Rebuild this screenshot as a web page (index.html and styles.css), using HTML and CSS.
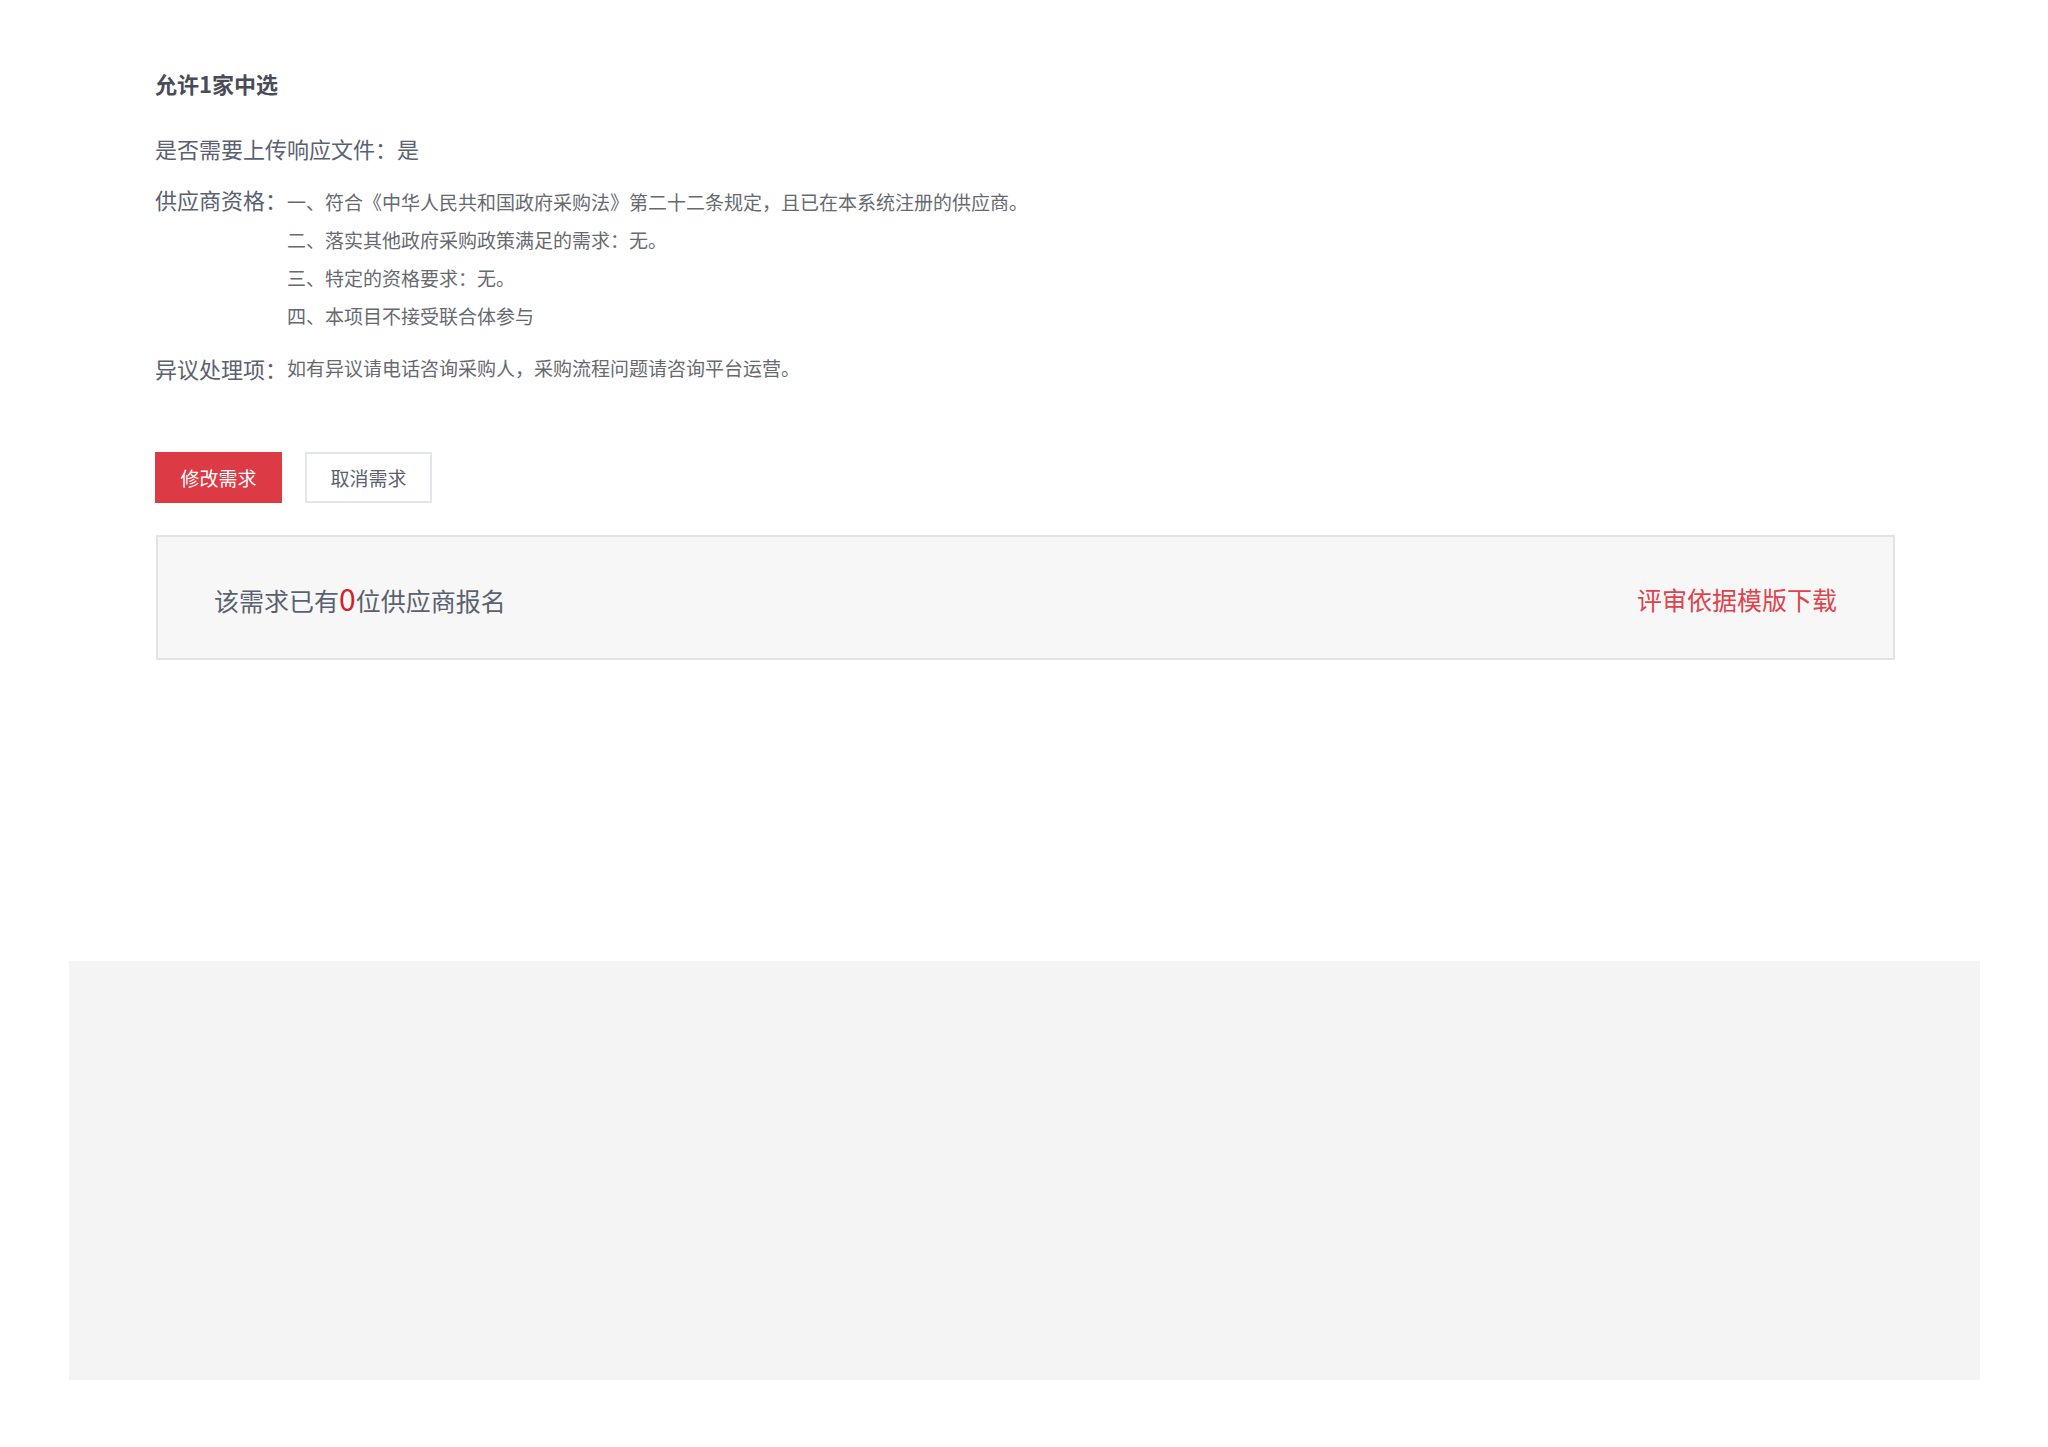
FILE: index.html
```html
<!DOCTYPE html>
<html lang="zh-CN">
<head>
<meta charset="utf-8">
<title>需求详情</title>
<link rel="stylesheet" href="styles.css">
</head>
<body>
<main class="content">
  <h2 class="title">允许1家中选</h2>
  <div class="row row-upload">是否需要上传响应文件：是</div>
  <div class="row row-qual">
    <span class="label">供应商资格：</span>
    <ul class="qual-list">
      <li>一、符合《中华人民共和国政府采购法》第二十二条规定，且已在本系统注册的供应商。</li>
      <li>二、落实其他政府采购政策满足的需求：无。</li>
      <li>三、特定的资格要求：无。</li>
      <li>四、本项目不接受联合体参与</li>
    </ul>
  </div>
  <div class="row row-objection">
    <span class="label">异议处理项：</span>
    <span class="value">如有异议请电话咨询采购人，采购流程问题请咨询平台运营。</span>
  </div>
  <div class="actions">
    <button class="btn btn-primary">修改需求</button>
    <button class="btn btn-default">取消需求</button>
  </div>
  <div class="signup-box">
    <div class="signup-text">该需求已有<span class="count">0</span>位供应商报名</div>
    <a class="download" href="#">评审依据模版下载</a>
  </div>
</main>
<footer class="footer-block"></footer>
</body>
</html>
```

FILE: styles.css
```css
html, body {
  margin: 0;
  padding: 0;
  background: #ffffff;
}

body {
  font-family: "Noto Sans CJK SC", "Noto Sans", sans-serif;
  color: #5a6170;
}

.content {
  margin-left: 155px;
  width: 1739px;
  padding-top: 68px;
}

.title {
  margin: 0;
  font-size: 22px;
  line-height: 30px;
  font-weight: 700;
  color: #484c58;
}

.row {
  font-size: 22px;
  color: #5a6170;
}

.row-upload {
  margin-top: 35px;
  line-height: 30px;
}

.row-qual {
  display: flex;
  align-items: flex-start;
  margin-top: 17px;
  line-height: 38px;
}

.label {
  flex: none;
  width: 132px;
  line-height: 38px;
}

.qual-list {
  list-style: none;
  margin: 0;
  padding: 3px 0 0 0;
  font-size: 19px;
  line-height: 38px;
  color: #666a70;
}

.row-objection {
  display: flex;
  margin-top: 14px;
  line-height: 38px;
}

.value {
  font-size: 19px;
  color: #666a70;
}

.actions {
  display: flex;
  gap: 23px;
  margin-top: 65px;
}

.btn {
  box-sizing: border-box;
  width: 127px;
  height: 51px;
  margin: 0;
  padding: 0;
  font-family: inherit;
  font-size: 19px;
  cursor: pointer;
}

.btn-primary {
  background: #dc3a45;
  border: 1px solid #dc3a45;
  color: #ffffff;
}

.btn-default {
  background: #ffffff;
  border: 2px solid #e2e5ea;
  color: #5a6170;
}

.signup-box {
  box-sizing: border-box;
  margin-top: 32px;
  margin-left: 1px;
  width: 1739px;
  height: 125px;
  border: 2px solid #e3e3e3;
  background: #f7f7f7;
  display: flex;
  align-items: center;
  justify-content: space-between;
  padding: 2px 56px 0 56px;
}

.signup-text {
  font-size: 25px;
  line-height: 36px;
  color: #5a6170;
}

.count {
  font-size: 30px;
  color: #d0222b;
}

.download {
  font-size: 25px;
  line-height: 36px;
  color: #e0434d;
  text-decoration: none;
}

.footer-block {
  margin: 301px 0 0 69px;
  width: 1911px;
  height: 419px;
  background: #f4f4f4;
}
```
